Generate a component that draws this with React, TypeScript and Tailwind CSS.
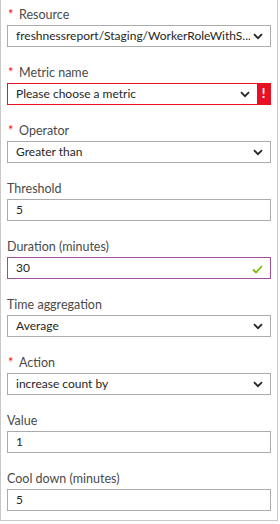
import React from 'react';

type Field = {
  label: string;
  value: string;
  required?: boolean;
  kind: 'select' | 'input';
  state?: 'error' | 'valid';
};

const fields: Field[] = [
  { label: 'Resource', value: 'freshnessreport/Staging/WorkerRoleWithS...', required: true, kind: 'select' },
  { label: 'Metric name', value: 'Please choose a metric', required: true, kind: 'select', state: 'error' },
  { label: 'Operator', value: 'Greater than', required: true, kind: 'select' },
  { label: 'Threshold', value: '5', kind: 'input' },
  { label: 'Duration (minutes)', value: '30', kind: 'input', state: 'valid' },
  { label: 'Time aggregation', value: 'Average', kind: 'select' },
  { label: 'Action', value: 'increase count by', required: true, kind: 'select' },
  { label: 'Value', value: '1', kind: 'input' },
  { label: 'Cool down (minutes)', value: '5', kind: 'input' },
];

function Chevron() {
  return (
    <svg width="10" height="7" viewBox="0 0 10 7" className="shrink-0">
      <path d="M1 1.2 L5 5.2 L9 1.2" fill="none" stroke="#262626" strokeWidth="1.8" />
    </svg>
  );
}

function Check() {
  return (
    <svg width="11" height="9" viewBox="0 0 11 9" className="shrink-0 mt-[3px]">
      <path d="M1 4.5 L4 7.5 L10 1" fill="none" stroke="#7fba00" strokeWidth="1.8" />
    </svg>
  );
}

function FormField({ field }: { field: Field }) {
  const border =
    field.state === 'error'
      ? 'border-[#e81123]'
      : field.state === 'valid'
        ? 'border-[#9b4f96]'
        : 'border-[#ababab]';

  return (
    <div className="flex flex-col">
      <div className="flex items-center h-[18px] text-[12.5px] text-[#4a4a4a] leading-[18px]">
        {field.required && <span className="text-[#e81123] text-[13px] w-[12px] pl-[1px] -mt-[3px]">*</span>}
        <span>{field.label}</span>
      </div>
      <div className={`mt-[1px] flex items-stretch h-[22px] w-[264px] border ${border} bg-white`}>
        <div className="flex-1 min-w-0 flex items-center gap-[3px] pl-[8px] pr-[7px] text-[12px] text-[#262626] whitespace-nowrap">
          <span className="flex-1 min-w-0 overflow-hidden">{field.value}</span>
          {field.kind === 'select' && <Chevron />}
          {field.state === 'valid' && <Check />}
        </div>
        {field.state === 'error' && (
          <div className="w-[13px] bg-[#e81123] flex items-center justify-center text-white text-[13px] font-bold">
            !
          </div>
        )}
      </div>
    </div>
  );
}

export default function App() {
  return (
    <div className="w-[280px] h-[524px] bg-white font-['Lato',sans-serif]">
      <div className="w-[278px] border-l border-r border-b border-[#c8c8c8] pl-[6px] pt-[6px] pb-[9px] flex flex-col gap-[17px]">
        {fields.map((f) => (
          <FormField key={f.label} field={f} />
        ))}
      </div>
    </div>
  );
}
